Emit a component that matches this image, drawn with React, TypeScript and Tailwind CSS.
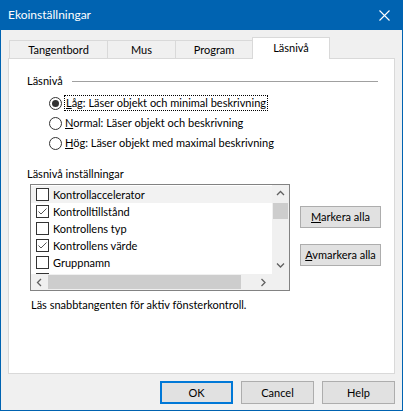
import React from 'react';

type Dir = 'up' | 'down' | 'left' | 'right';

const Chevron = ({ dir }: { dir: Dir }) => {
  const paths: Record<Dir, string> = {
    up: 'M1 5 L4.5 1.5 L8 5',
    down: 'M1 1.5 L4.5 5 L8 1.5',
    left: 'M5 1 L1.5 4.5 L5 8',
    right: 'M1.5 1 L5 4.5 L1.5 8',
  };
  const vertical = dir === 'up' || dir === 'down';
  return (
    <svg width={vertical ? 9 : 7} height={vertical ? 7 : 9} viewBox={vertical ? '0 0 9 7' : '0 0 7 9'}>
      <path d={paths[dir]} fill="none" stroke="#606060" strokeWidth="1.3" />
    </svg>
  );
};

const CheckBox = ({ checked }: { checked?: boolean }) => (
  <span className="w-[13px] h-[13px] border border-[#333333] bg-white flex items-center justify-center shrink-0">
    {checked && (
      <svg width="11" height="11" viewBox="0 0 11 11">
        <path d="M1.5 5.5 L4 8 L9.5 2.5" fill="none" stroke="#555555" strokeWidth="1" />
      </svg>
    )}
  </span>
);

const Radio = ({ checked }: { checked?: boolean }) => (
  <span className="w-[13px] h-[13px] rounded-full border border-[#333333] bg-white flex items-center justify-center shrink-0">
    {checked && <span className="w-[7px] h-[7px] rounded-full bg-[#333333]" />}
  </span>
);

const WinButton = ({
  children,
  isDefault,
  className = '',
}: {
  children: React.ReactNode;
  isDefault?: boolean;
  className?: string;
}) => (
  <button
    type="button"
    className={`bg-[#e1e1e1] flex items-center justify-center text-black whitespace-nowrap ${
      isDefault ? 'border-2 border-[#0078d7]' : 'border border-[#adadad]'
    } ${className}`}
  >
    {children}
  </button>
);

const items = [
  { label: 'Kontrollaccelerator', checked: false },
  { label: 'Kontrolltillstånd', checked: true },
  { label: 'Kontrollens typ', checked: false },
  { label: 'Kontrollens värde', checked: true },
  { label: 'Gruppnamn', checked: false },
];

export default function App() {
  return (
    <div className="w-[403px] h-[411px] bg-[#0063b1] flex flex-col font-['Lato',sans-serif] text-[11px] text-black leading-[14px]">
      {/* Title bar */}
      <div className="h-[30px] flex items-center justify-between pl-[8px] pr-[13px] text-white text-[12px] shrink-0">
        <span>Ekoinställningar</span>
        <svg width="11" height="11" viewBox="0 0 11 11">
          <path d="M0.5 0.5 L10.5 10.5 M10.5 0.5 L0.5 10.5" stroke="#ffffff" strokeWidth="1.1" />
        </svg>
      </div>

      {/* Body */}
      <div className="flex-1 mx-px mb-px bg-[#f0f0f0] flex flex-col">
        {/* Tabs */}
        <div className="flex items-end h-[21px] mt-[7px] ml-[8px]">
          <div className="w-[99px] h-[18px] border border-b-0 border-[#d9d9d9] flex items-center justify-center">
            Tangentbord
          </div>
          <div className="w-[69px] h-[18px] -ml-px border border-b-0 border-[#d9d9d9] flex items-center justify-center">
            Mus
          </div>
          <div className="w-[78px] h-[18px] -ml-px border border-b-0 border-[#d9d9d9] flex items-center justify-center">
            Program
          </div>
          <div className="relative z-10 w-[78px] h-[22px] -ml-px -mb-px bg-white border border-b-0 border-[#d9d9d9] flex items-center justify-center pb-[2px]">
            Läsnivå
          </div>
        </div>

        {/* Tab panel */}
        <div className="mx-[7px] h-[316px] bg-white border border-[#d9d9d9] flex flex-col">
          <div className="flex items-center h-[14px] mt-[15px] ml-[18px] mr-[16px]">
            <span>Läsnivå</span>
            <div className="flex-1 h-px bg-[#a0a0a0] ml-[9px]" />
          </div>

          <div className="mt-[5px] ml-[40px] flex flex-col">
            <div className="h-[20px] flex items-center gap-[2px]">
              <Radio checked />
              <span className="border border-dotted border-black px-px">
                <span className="underline">L</span>åg: Läser objekt och minimal beskrivning
              </span>
            </div>
            <div className="h-[20px] flex items-center gap-[3px]">
              <Radio />
              <span>
                <span className="underline">N</span>ormal: Läser objekt och beskrivning
              </span>
            </div>
            <div className="h-[20px] flex items-center gap-[3px]">
              <Radio />
              <span>
                <span className="underline">H</span>ög: Läser objekt med maximal beskrivning
              </span>
            </div>
          </div>

          <div className="mt-[14px] ml-[18px] h-[14px]">Läsnivå inställningar</div>

          <div className="mt-[3px] ml-[21px] flex">
            {/* Listbox */}
            <div className="w-[260px] h-[107px] border border-[#828282] bg-white flex flex-col">
              <div className="flex h-[89px]">
                <div className="flex-1 overflow-hidden pt-[1px]">
                  {items.map((item, i) => (
                    <div
                      key={item.label}
                      className={`h-[17px] flex items-center pl-[5px] gap-[4px] ${i === 0 ? 'bg-[#f2f2f2]' : ''}`}
                    >
                      <CheckBox checked={item.checked} />
                      <span>{item.label}</span>
                    </div>
                  ))}
                  {/* next row, scrolled mostly out of view */}
                  <div className="h-[17px] pl-[5px] pt-[2px]">
                    <span className="block w-[13px] h-[13px] border border-[#333333]" />
                  </div>
                </div>
                <div className="w-[17px] bg-[#f0f0f0] flex flex-col items-center">
                  <div className="h-[17px] flex items-center justify-center">
                    <Chevron dir="up" />
                  </div>
                  <div className="h-[16px] w-[15px] bg-[#cdcdcd] mt-px" />
                  <div className="flex-1" />
                  <div className="h-[17px] flex items-center justify-center">
                    <Chevron dir="down" />
                  </div>
                </div>
              </div>
              <div className="flex h-[16px]">
                <div className="flex-1 bg-[#f0f0f0] flex items-center">
                  <div className="w-[17px] flex items-center justify-center">
                    <Chevron dir="left" />
                  </div>
                  <div className="h-[14px] w-[193px] bg-[#cdcdcd]" />
                  <div className="flex-1" />
                  <div className="w-[17px] flex items-center justify-center">
                    <Chevron dir="right" />
                  </div>
                </div>
                <div className="w-[17px] bg-[#f0f0f0]" />
              </div>
            </div>

            <div className="ml-[10px] pt-[22px] flex flex-col gap-[16px]">
              <WinButton className="w-[81px] h-[22px]">
                <span>
                  <span className="underline">M</span>arkera alla
                </span>
              </WinButton>
              <WinButton className="w-[81px] h-[22px]">
                <span>
                  <span className="underline">A</span>vmarkera alla
                </span>
              </WinButton>
            </div>
          </div>

          <div className="mt-[7px] ml-[22px]">Läs snabbtangenten för aktiv fönsterkontroll.</div>
        </div>

        {/* Footer buttons */}
        <div className="mt-[7px] flex justify-end gap-[8px] pr-[7px]">
          <WinButton isDefault className="w-[73px] h-[23px]">
            OK
          </WinButton>
          <WinButton className="w-[73px] h-[23px]">Cancel</WinButton>
          <WinButton className="w-[73px] h-[23px]">Help</WinButton>
        </div>
      </div>
    </div>
  );
}
